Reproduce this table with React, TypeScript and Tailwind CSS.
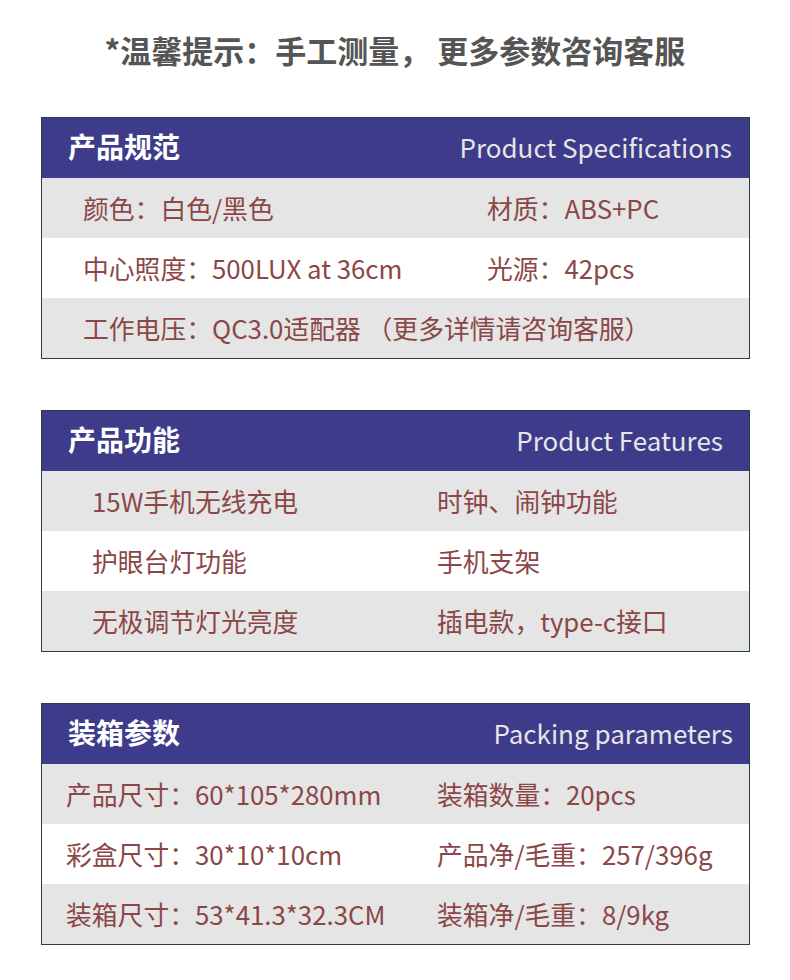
const font = { fontFamily: '"Noto Sans CJK SC", "Noto Sans", sans-serif' }

type Section = {
  title: string
  subtitle: string
  subPad: string
  textPad: string
  leftCol: string
  rows: [string, string?][]
}

const sections: Section[] = [
  {
    title: '产品规范',
    subtitle: 'Product Specifications',
    subPad: 'pr-[17px]',
    textPad: 'pl-[41px]',
    leftCol: 'w-[404px]',
    rows: [
      ['颜色：白色/黑色', '材质：ABS+PC'],
      ['中心照度：500LUX at 36cm', '光源：42pcs'],
      ['工作电压：QC3.0适配器 （更多详情请咨询客服）'],
    ],
  },
  {
    title: '产品功能',
    subtitle: 'Product Features',
    subPad: 'pr-[26px]',
    textPad: 'pl-[50px]',
    leftCol: 'w-[345px]',
    rows: [
      ['15W手机无线充电', '时钟、闹钟功能'],
      ['护眼台灯功能', '手机支架'],
      ['无极调节灯光亮度', '插电款，type-c接口'],
    ],
  },
  {
    title: '装箱参数',
    subtitle: 'Packing parameters',
    subPad: 'pr-[16px]',
    textPad: 'pl-[24px]',
    leftCol: 'w-[371px]',
    rows: [
      ['产品尺寸：60*105*280mm', '装箱数量：20pcs'],
      ['彩盒尺寸：30*10*10cm', '产品净/毛重：257/396g'],
      ['装箱尺寸：53*41.3*32.3CM', '装箱净/毛重：8/9kg'],
    ],
  },
]

export default function App() {
  return (
    <div className="w-[790px] h-[980px] bg-white" style={font}>
      <div className="pt-[28px] h-[117px] text-center text-[31px] font-bold text-[#555555] leading-[44px] whitespace-nowrap">
        *温馨提示：手工测量， 更多参数咨询客服
      </div>
      <div className="flex flex-col gap-[51px] px-[41px]">
        {sections.map((s) => (
          <SpecTable key={s.title} section={s} />
        ))}
      </div>
    </div>
  )
}

function SpecTable({ section }: { section: Section }) {
  return (
    <div className="w-[709px] border border-[#25403d]">
      <div className={`h-[60px] bg-[#3d3b8a] flex items-center justify-between pb-[4px] pl-[26px] ${section.subPad}`}>
        <span className="text-[28px] font-bold text-white">{section.title}</span>
        <span className="text-[26px] text-[#e6e6e6]">{section.subtitle}</span>
      </div>
      {section.rows.map((row, i) => (
        <div
          key={i}
          className={`h-[60px] flex items-center text-[25.8px] text-[#8b4747] whitespace-nowrap ${section.textPad} ${i % 2 === 0 ? 'bg-[#e5e5e5]' : 'bg-white'}`}
        >
          <span className={row[1] ? section.leftCol : ''}>{row[0]}</span>
          {row[1] && <span>{row[1]}</span>}
        </div>
      ))}
    </div>
  )
}
